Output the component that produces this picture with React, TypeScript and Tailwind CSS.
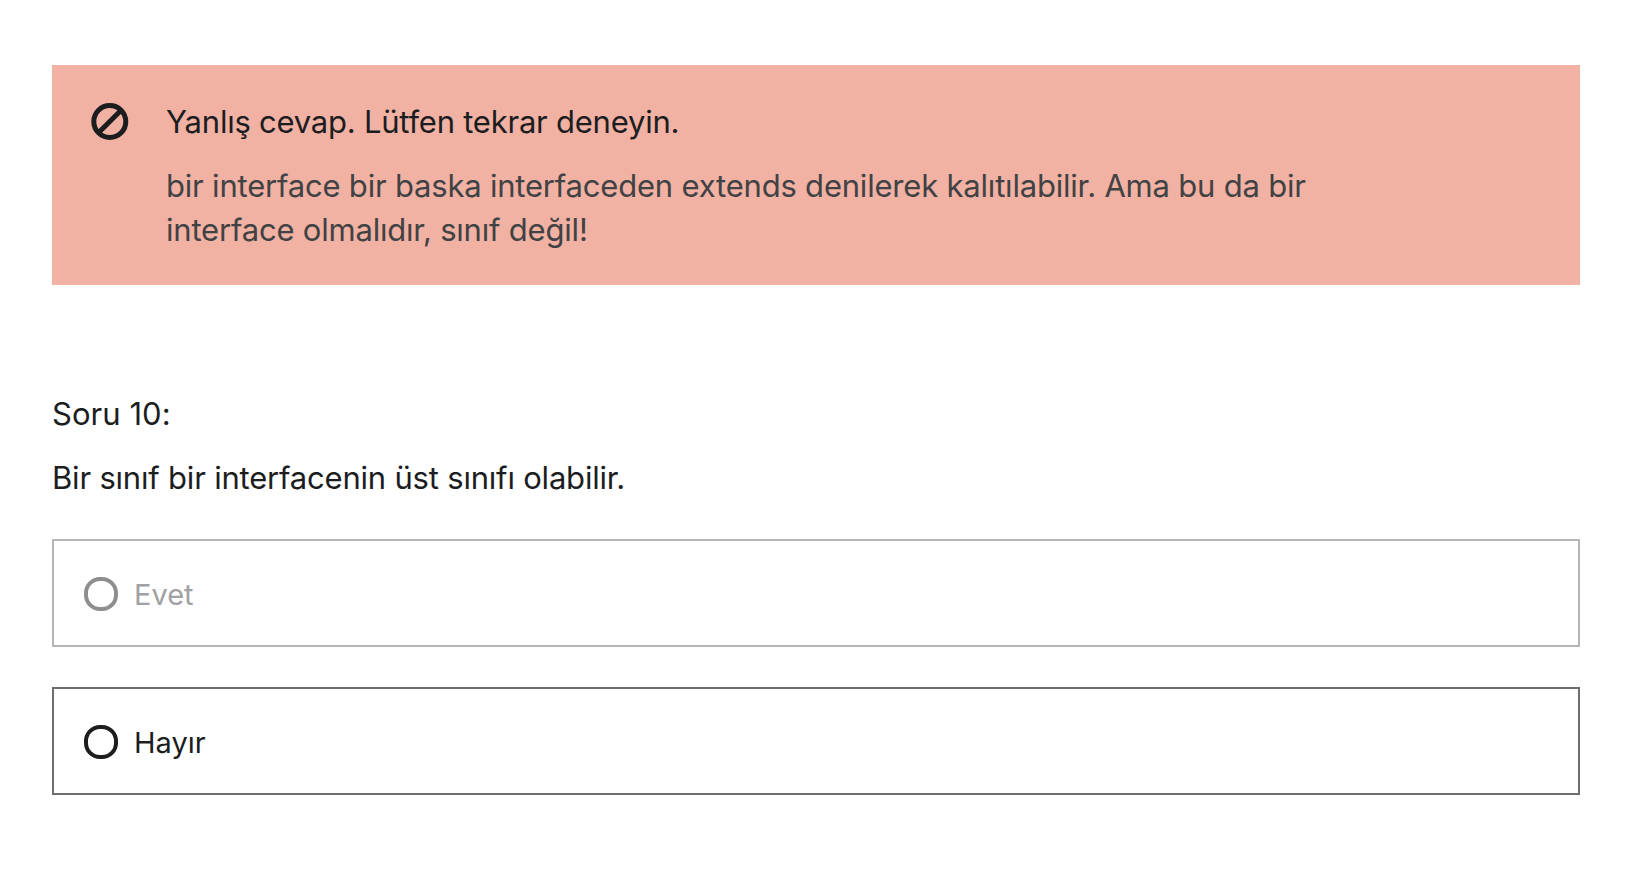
export default function App() {
  const options = [
    { label: "Evet", disabled: true },
    { label: "Hayır", disabled: false },
  ];
  return (
    <main className="h-[886px] bg-white px-[52px] pt-[65px] font-['Inter',sans-serif] text-[31px] leading-[44px] tracking-[-0.2px] text-[#1c1d1f]">
      <section className="flex h-[220px] w-[1528px] bg-[#f1b1a3] pl-[39px] pt-[35px]">
        <svg className="mt-[3px] size-[38px] shrink-0" viewBox="0 0 38 38" fill="none" stroke="currentColor" strokeWidth="5">
          <circle cx="18.8" cy="18.5" r="16" />
          <path d="M7.5 29.8 30.1 7.2" />
        </svg>
        <div className="ml-[37px]">
          <h2 className="whitespace-nowrap tracking-[-0.23px]">Yanlış cevap. Lütfen tekrar deneyin.</h2>
          <p className="mt-5 whitespace-nowrap text-[#414243]">bir interface bir baska interfaceden extends denilerek kalıtılabilir. Ama bu da bir<br />interface olmalıdır, sınıf değil!</p>
        </div>
      </section>
      <h1 className="mt-[107px] tracking-[0.05px]">Soru 10:</h1>
      <p className="mt-5">Bir sınıf bir interfacenin üst sınıfı olabilir.</p>
      <div className="mt-[39px] flex w-[1528px] flex-col gap-10 text-[29px] tracking-normal">
        {options.map((o) => (
          <label key={o.label} className={`flex h-[108px] items-center border-2 pl-[30px] pt-0.5 ${o.disabled ? "border-[#b5b5b5] text-[#a1a1a2]" : "border-[#6c6e72]"}`}>
            <input type="radio" name="answer" disabled={o.disabled} className={`size-[34px] appearance-none rounded-[16px] border-4 ${o.disabled ? "border-[#8e8e8f]" : "border-[#1c1d1f]"}`} />
            <span className="ml-4 pt-0.5">{o.label}</span>
          </label>
        ))}
      </div>
    </main>
  );
}
